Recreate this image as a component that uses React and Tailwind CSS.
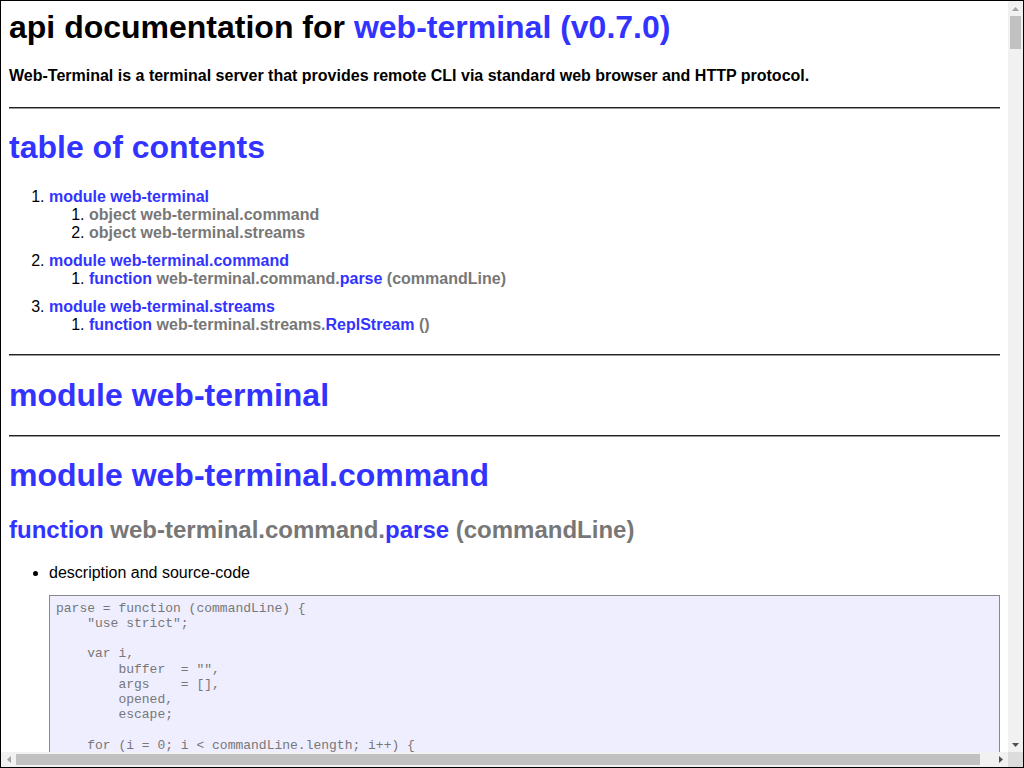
import React from "react";

const blue = "text-[#3333ff]";
const gray = "text-[#777777]";

const toc = [
  {
    name: "module web-terminal",
    items: [
      { kind: "object", path: "web-terminal.command" },
      { kind: "object", path: "web-terminal.streams" },
    ],
  },
  {
    name: "module web-terminal.command",
    items: [{ kind: "function", path: "web-terminal.command.", fn: "parse", sig: "(commandLine)" }],
  },
  {
    name: "module web-terminal.streams",
    items: [{ kind: "function", path: "web-terminal.streams.", fn: "ReplStream", sig: "()" }],
  },
];

const parseSource = `parse = function (commandLine) {
    "use strict";

    var i,
        buffer  = "",
        args    = [],
        opened,
        escape;

    for (i = 0; i < commandLine.length; i++) {
        if (escape) {
            buffer += commandLine[i];
            escape = false;
        } else if (commandLine[i] === "\\\\") {
            escape = true;
        } else if (!opened && /\\s/.test(commandLine[i])) {
            if (buffer.length) {
                args.push(buffer);
                buffer = "";
            }
        } else {
            buffer += commandLine[i];
        }
    }

    return args;
}`;

function Rule() {
  return <hr className="border-0 border-t border-t-[#222222] border-b border-b-[#999999] m-0" />;
}

// little scrollbar arrow, dir = up | down | left | right
function Arrow({ dir, dark }) {
  const pts = {
    up: "0,4 7,4 3.5,0",
    down: "0,0 7,0 3.5,4",
    left: "4,0 4,7 0,3.5",
    right: "0,0 0,7 4,3.5",
  }[dir];
  const vertical = dir === "up" || dir === "down";
  return (
    <svg width={vertical ? 7 : 4} height={vertical ? 4 : 7} viewBox={vertical ? "0 0 7 4" : "0 0 4 7"}>
      <polygon points={pts} fill={dark ? "#505050" : "#a3a3a3"} />
    </svg>
  );
}

function TocItem({ it }) {
  return (
    <li>
      <span className={`font-bold ${it.kind === "function" ? blue : gray}`}>{it.kind}</span>{" "}
      <span className={`font-bold ${gray}`}>{it.path}</span>
      {it.fn ? <span className={`font-bold ${blue}`}>{it.fn}</span> : null}
      {it.sig ? <span className={`font-bold ${gray}`}> {it.sig}</span> : null}
    </li>
  );
}

function Page() {
  return (
    <div className="p-2">
      <h1 className="text-[32px] font-bold mb-[0.67em]">
        api documentation for <span className={blue}>web-terminal (v0.7.0)</span>
      </h1>
      <p className="font-bold mb-[22px]">
        Web-Terminal is a terminal server that provides remote CLI via standard web browser and HTTP protocol.
      </p>
      <Rule />

      <h1 className={`text-[32px] font-bold mt-[20px] mb-[0.67em] ${blue}`}>table of contents</h1>
      <ol className="list-decimal pl-10 mt-[22px] mb-[20px]">
        {toc.map((m, i) => (
          <li key={m.name} className={i < toc.length - 1 ? "mb-[10px]" : ""}>
            <span className={`font-bold ${blue}`}>{m.name}</span>
            <ol className="list-decimal pl-10">
              {m.items.map((it) => (
                <TocItem key={it.path + (it.fn || "")} it={it} />
              ))}
            </ol>
          </li>
        ))}
      </ol>
      <Rule />

      <h1 className={`text-[32px] font-bold mt-[20.5px] mb-[0.67em] ${blue}`}>module web-terminal</h1>
      <Rule />

      <h1 className={`text-[32px] font-bold mt-[20px] mb-[0.67em] ${blue}`}>module web-terminal.command</h1>
      <h2 className="text-[24px] font-bold mb-[20px]">
        <span className={blue}>function</span> <span className={gray}>web-terminal.command.</span>
        <span className={blue}>parse</span> <span className={gray}>(commandLine)</span>
      </h2>
      <ul className="list-disc pl-10">
        <li>
          description and source-code
          <pre
            className="my-[13px] bg-[#eeeeff] border border-[#888888] pt-[5px] pb-[4px] pl-[6px] pr-[6px] text-[13px] leading-[15.2px] text-[#777777]"
            style={{ fontFamily: '"Liberation Mono", "Courier New", monospace' }}
          >
            {parseSource}
          </pre>
        </li>
      </ul>
    </div>
  );
}

export default function App() {
  return (
    <div
      className="w-[1024px] h-[768px] border border-black flex flex-col overflow-hidden bg-white text-black leading-[normal] text-[16px]"
      style={{ fontFamily: '"Liberation Sans", Arial, sans-serif' }}
    >
      <div className="flex flex-1 min-h-0">
        <div className="flex-1 min-w-0 overflow-hidden">
          <Page />
        </div>
        {/* vertical scrollbar */}
        <div className="w-[15px] flex flex-col bg-[#f1f1f1]">
          <div className="h-[15px] flex items-center justify-center">
            <Arrow dir="up" />
          </div>
          <div className="flex-1">
            <div className="mx-[2px] h-[33px] bg-[#c1c1c1]" />
          </div>
          <div className="h-[15px] flex items-center justify-center">
            <Arrow dir="down" dark />
          </div>
        </div>
      </div>
      {/* horizontal scrollbar */}
      <div className="flex h-[15px]">
        <div className="flex-1 flex bg-[#f1f1f1]">
          <div className="w-[15px] flex items-center justify-center">
            <Arrow dir="left" />
          </div>
          <div className="flex-1 flex items-center">
            <div className="w-[964px] h-[11px] bg-[#c1c1c1]" />
          </div>
          <div className="w-[15px] flex items-center justify-center">
            <Arrow dir="right" dark />
          </div>
        </div>
        <div className="w-[15px] bg-[#dcdcdc]" />
      </div>
    </div>
  );
}
